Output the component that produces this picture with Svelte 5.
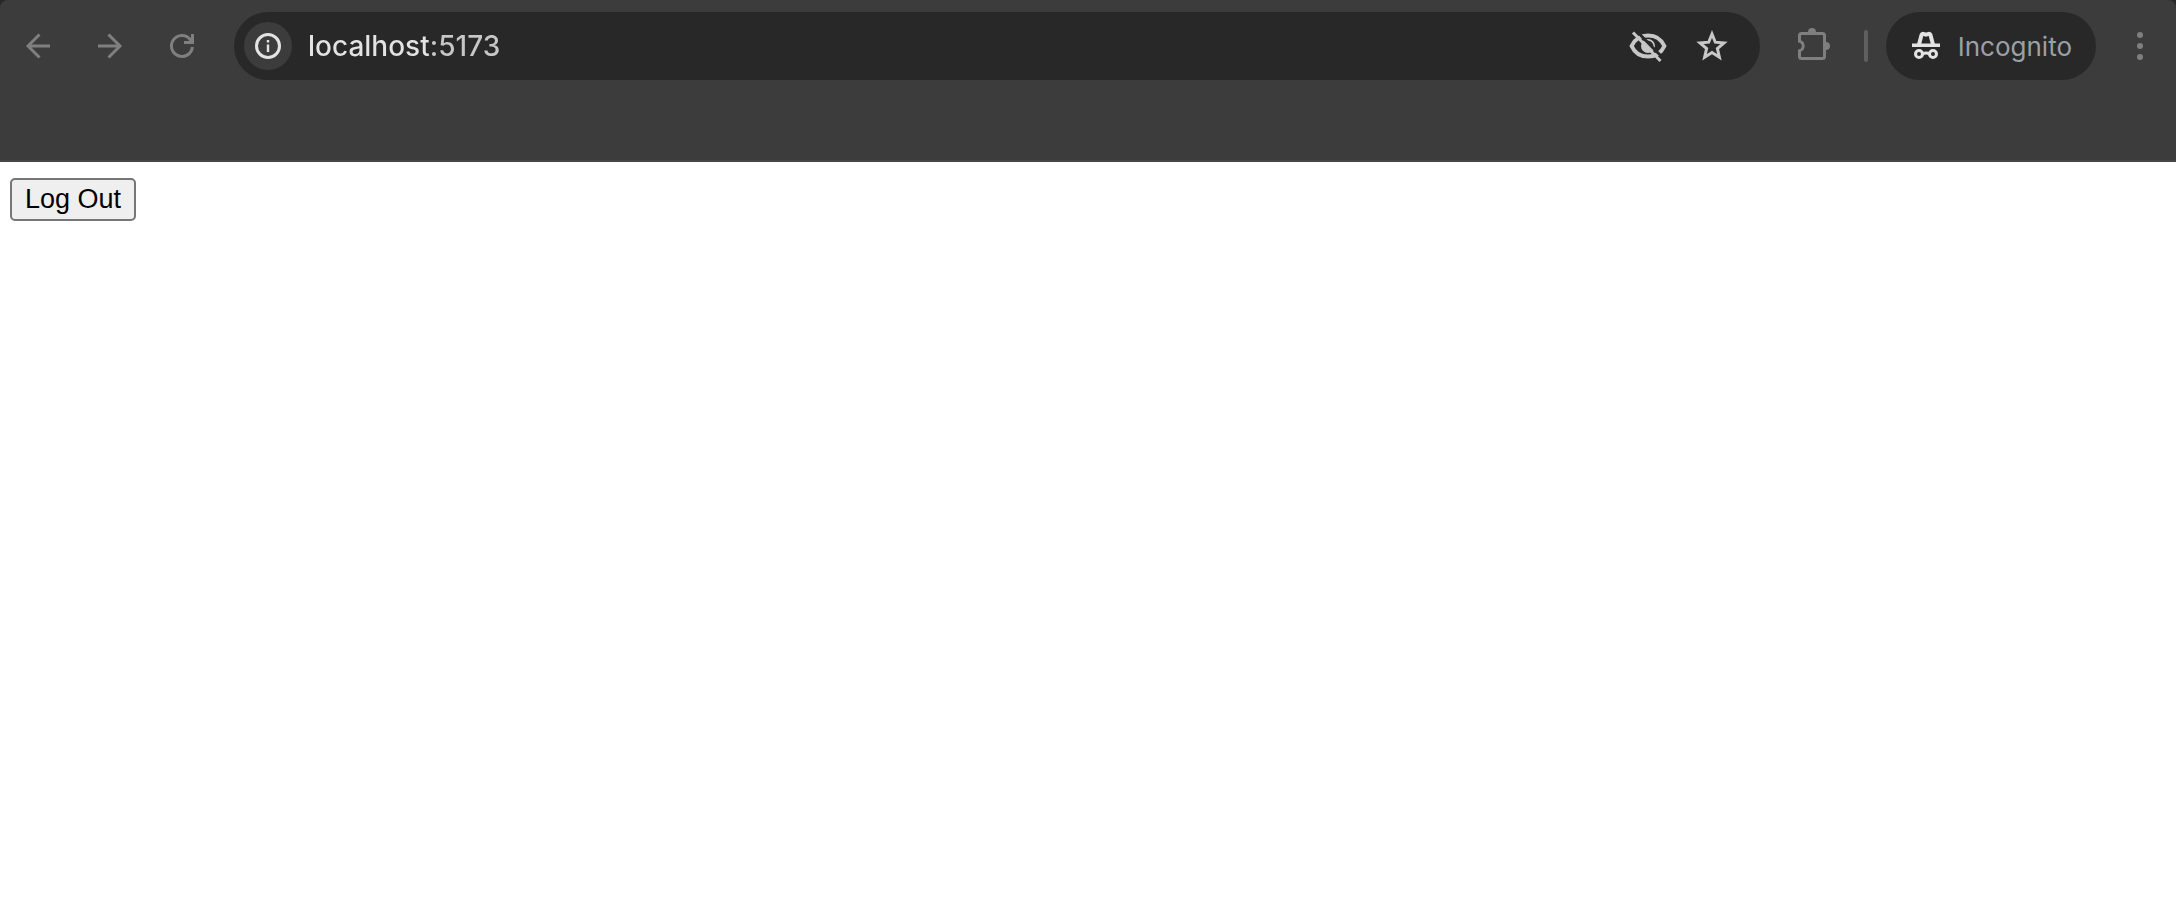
<script lang="ts">
  let address = $state('localhost:5173');
  let loggedIn = $state(true);
</script>

<div class="frame">
  <header class="toolbar">
    <nav class="nav">
      <button type="button" class="tool" aria-label="Back">
        <svg width="36" height="36" viewBox="0 0 36 36">
          <path d="M30 18H8M19.5 6.500 8 18l11.500 11.500" class="stroke" />
        </svg>
      </button>
      <button type="button" class="tool" aria-label="Forward">
        <svg width="36" height="36" viewBox="0 0 36 36">
          <path d="M6 18h22M16.5 6.500 28 18 16.500 29.500" class="stroke" />
        </svg>
      </button>
      <button type="button" class="tool" aria-label="Reload">
        <svg width="36" height="36" viewBox="0 0 36 36">
          <path d="M28.4 19A10.5 10.5 0 1 1 26 11.2l2.5 3" class="stroke" />
          <path d="M28.5 6v8.5H20" class="stroke" />
        </svg>
      </button>
    </nav>

    <div class="omnibox">
      <button type="button" class="site-info" aria-label="View site information">
        <svg width="28" height="28" viewBox="0 0 28 28">
          <circle cx="14" cy="14" r="11.5" class="stroke" />
          <path d="M12.8 12.5h2.4V20h-2.4zM12.8 8h2.4v2.4h-2.4z" fill="currentColor" />
        </svg>
      </button>
      <input class="address" type="text" aria-label="Address and search bar" spellcheck="false" bind:value={address} />
      <button type="button" class="action" aria-label="Third-party cookies blocked">
        <svg width="40" height="40" viewBox="0 0 40 40">
          <path
            d="M3.6 20C6.5 13.5 12.6 9.4 20 9.4S33.5 13.5 36.4 20C33.5 26.5 27.4 30.6 20 30.6S6.500 26.5 3.6 20z"
            class="stroke heavy"
          />
          <circle cx="20" cy="20" r="7" fill="currentColor" />
          <path d="M19.5 15.5a5 5 0 0 1 5 5" class="cut thin" />
          <path d="M8 4.500 35.5 32.500" class="cut" />
          <path d="M5 6.500 32.500 35" class="stroke" />
        </svg>
      </button>
      <button type="button" class="action" aria-label="Bookmark this tab">
        <svg width="36" height="36" viewBox="0 0 36 36">
          <path
            d="M18 6l3.300 8.200 8.700.7-6.600 5.700 2 8.600L18 24.600l-7.400 4.600 2-8.600L6 14.900l8.700-.7z"
            class="stroke"
          />
        </svg>
      </button>
    </div>

    <button type="button" class="tool extensions" aria-label="Extensions">
      <svg width="36" height="36" viewBox="0 0 36 36">
        <path
          d="M5.5 13.500v-6q0-2 2-2h21q2 0 2 2v21q0 2-2 2h-21q-2 0-2-2v-6a4.600 4.600 0 0 0 0-9z"
          class="stroke"
        />
        <path d="M4 14.500a3.500 3.500 0 0 1 0 7z" class="notch" />
        <path d="M14 4a4 4 0 0 1 8 0zM32 14a4 4 0 0 1 0 8z" fill="currentColor" />
      </svg>
    </button>
    <span class="divider"></span>

    <button type="button" class="incognito">
      <svg width="28" height="28" viewBox="0 0 28 28">
        <path d="M0 11.500h28V15H0z" fill="currentColor" />
        <path d="M7 12.5 9.500 3q.5-1.400 1.900-1.100l2.600.8 2.600-.8q1.400-.3 1.900 1.100L21 12.5" class="stroke heavy" />
        <circle cx="7" cy="22" r="3.500" class="stroke" />
        <circle cx="21" cy="22" r="3.500" class="stroke" />
        <path d="M10.500 22q3.500-2 7 0" class="stroke" />
      </svg>
      Incognito
    </button>

    <button type="button" class="tool menu" aria-label="Browser menu">
      <svg width="36" height="36" viewBox="0 0 36 36" fill="currentColor">
        <circle cx="18" cy="7" r="3" />
        <circle cx="18" cy="18" r="3" />
        <circle cx="18" cy="29" r="3" />
      </svg>
    </button>
  </header>
</div>

<main>
  {#if loggedIn}
    <button type="button" class="logout" onclick={() => (loggedIn = false)}>Log Out</button>
  {/if}
</main>

<style>
  :global(body) {
    background: #fff;
  }

  button {
    margin: 0;
    cursor: pointer;
  }

  svg {
    display: block;
    flex: none;
    overflow: visible;
  }

  .stroke {
    fill: none;
    stroke: currentColor;
    stroke-width: 3;
  }

  .heavy {
    stroke-width: 4;
  }

  .cut {
    fill: none;
    stroke: #282828;
    stroke-width: 3;
  }

  .thin {
    stroke-width: 2;
  }

  .notch {
    fill: #3c3c3c;
  }

  .frame {
    background: #282828;
  }

  .toolbar {
    display: flex;
    align-items: flex-start;
    box-sizing: border-box;
    height: 162px;
    padding: 12px 0 0 2px;
    border-radius: 8px 8px 0 0;
    background: #3c3c3c;
    box-shadow: inset 0 -2px #464445;
    font-family: Inter, Roboto, sans-serif;
  }

  .nav {
    display: flex;
    margin-right: 16px;
  }

  .tool {
    display: flex;
    align-items: center;
    justify-content: center;
    width: 72px;
    height: 68px;
    padding: 0;
    border: none;
    background: transparent;
    color: #7f7f7f;
  }

  .omnibox {
    display: flex;
    flex: 1;
    align-items: center;
    min-width: 0;
    height: 68px;
    box-sizing: border-box;
    padding: 0 16px 0 10px;
    border-radius: 34px;
    background: #282828;
  }

  .site-info {
    display: flex;
    align-items: center;
    justify-content: center;
    width: 48px;
    height: 48px;
    padding: 0;
    border: none;
    border-radius: 50%;
    background: #3c3c3c;
    color: #e3e3e3;
  }

  /* host is brighter than the port */
  .address {
    flex: 1;
    min-width: 0;
    height: 48px;
    margin-left: 16px;
    padding: 0;
    border: none;
    outline: none;
    background: linear-gradient(to right, #e3e3e3 120px, #c7c7c7 120px);
    background-clip: text;
    color: #e3e3e3;
    -webkit-text-fill-color: transparent;
    font-family: inherit;
    font-size: 28px;
    font-weight: 500;
  }

  .action {
    display: flex;
    align-items: center;
    justify-content: center;
    width: 64px;
    height: 68px;
    padding: 0;
    border: none;
    background: transparent;
    color: #c7c7c7;
  }

  .extensions {
    margin-left: 16px;
  }

  .divider {
    width: 4px;
    height: 32px;
    margin: 18px 18px 0 16px;
    border-radius: 2px;
    background: #5f5f5f;
  }

  .incognito {
    display: flex;
    align-items: center;
    gap: 18px;
    height: 68px;
    padding: 0 24px 0 26px;
    border: none;
    border-radius: 34px;
    background: #282828;
    color: #9aa0a6;
    font-family: inherit;
    font-size: 26px;
  }

  .incognito svg {
    color: #e3e3e3;
  }

  .menu {
    margin-left: 8px;
  }

  main {
    padding: 16px 10px;
  }

  .logout {
    padding: 4px 13px;
    border: 2px solid #767676;
    border-radius: 5px;
    background: #efefef;
    color: #000;
    font-family: 'Liberation Sans', Arial, sans-serif;
    font-size: 27px;
    line-height: 31px;
  }
</style>
